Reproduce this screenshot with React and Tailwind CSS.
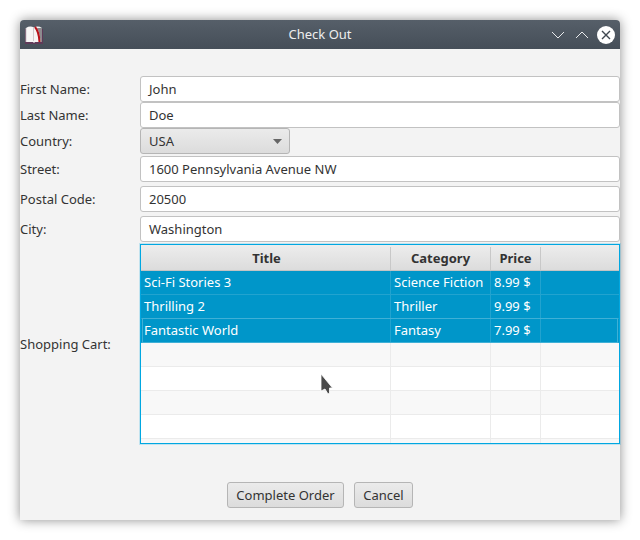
import React from 'react';

const items = [
    { title: 'Sci-Fi Stories 3', category: 'Science Fiction', price: '8.99 $' },
    { title: 'Thrilling 2', category: 'Thriller', price: '9.99 $' },
    { title: 'Fantastic World', category: 'Fantasy', price: '7.99 $' },
];

const Field = ({ label, value, className = '' }) => (
    <div className={`flex items-center ${className}`}>
        <span className="w-[120px] shrink-0 pt-[2px] text-[#333333]">{label}</span>
        <div className="flex h-[26px] grow items-center rounded-[3px] border border-[#c2c2c2] bg-white px-2 pt-[2px] text-[#333333]">
            {value}
        </div>
    </div>
);

const BookIcon = () => (
    <svg width="20" height="20" viewBox="0 0 20 20" className="block">
        <path d="M1 4 V19 H19 V4 Z" fill="#5f3a58" />
        <path d="M2 17 V3 Q6 0.5 10 2.5 Q14 0.5 18 3 V17 H11 L10 18 L9 17 Z" fill="#f7f5f5" />
        <path d="M13 3 Q16 8 16.5 17 H18 V3 Z" fill="#8d8a8e" />
        <path d="M2 3 V17 M9.5 3 V16" stroke="#c4bfc3" strokeWidth="0.8" fill="none" />
        <path d="M11 2 Q15 6.5 15.5 17" fill="none" stroke="#b8141c" strokeWidth="2" />
    </svg>
);

const Cursor = () => (
    <svg width="15" height="22" viewBox="0 0 15 22" className="absolute left-[178px] top-[128px]">
        <path d="M2 1 V18 L6 16 L9 21 L10.5 20 V15 H13.5 Z" fill="#4a4a4a" stroke="#ffffff" strokeWidth="0.8" />
    </svg>
);

export default function App() {
    return (
        <div className="h-[540px] w-[640px] bg-white pl-5 pt-5 font-['Noto_Sans',sans-serif] text-[13px]">
            <div className="flex h-[500px] w-[600px] flex-col rounded-t-[4px] bg-[#f3f3f3] shadow-[0_0_12px_rgba(0,0,0,0.45)]">
                {/* title bar */}
                <div className="grid h-[29px] shrink-0 grid-cols-[1fr_auto_1fr] items-center rounded-t-[4px] bg-gradient-to-b from-[#565f69] to-[#454e58] pl-[4px] pr-[5px]">
                    <BookIcon />
                    <span className="pl-px text-[#eeeeee]">Check Out</span>
                    <div className="flex items-center justify-end gap-[6px]">
                        <svg width="18" height="18" viewBox="0 0 18 18" fill="none" stroke="#e8eaec" strokeWidth="1">
                            <path d="M3 6 L9 12 L15 6" />
                        </svg>
                        <svg width="18" height="18" viewBox="0 0 18 18" fill="none" stroke="#e8eaec" strokeWidth="1">
                            <path d="M3 12 L9 6 L15 12" />
                        </svg>
                        <svg width="18" height="18" viewBox="0 0 18 18">
                            <circle cx="9" cy="9" r="9" fill="#ffffff" />
                            <path d="M5 5 L13 13 M13 5 L5 13" stroke="#3f4750" strokeWidth="1.4" />
                        </svg>
                    </div>
                </div>

                {/* form */}
                <div className="flex grow flex-col pt-[27px]">
                    <Field label="First Name:" value="John" />
                    <Field label="Last Name:" value="Doe" />
                    <div className="flex items-center">
                        <span className="w-[120px] shrink-0 pt-[2px] text-[#333333]">Country:</span>
                        <div className="flex h-[26px] w-[150px] items-center justify-between rounded-[3px] border border-[#b5b5b5] bg-gradient-to-b from-[#ebebeb] to-[#dcdcdc] pl-2 pr-[7px] text-[#333333]">
                            <span className="pt-[2px]">USA</span>
                            <svg width="9" height="5" viewBox="0 0 9 5">
                                <path d="M0 0 H9 L4.5 5 Z" fill="#666666" />
                            </svg>
                        </div>
                    </div>
                    <Field label="Street:" value="1600 Pennsylvania Avenue NW" className="mt-[2px]" />
                    <Field label="Postal Code:" value="20500" className="mt-1" />
                    <Field label="City:" value="Washington" className="mt-1" />

                    <div className="mt-[2px] flex items-center">
                        <span className="w-[120px] shrink-0 pt-[2px] text-[#333333]">Shopping Cart:</span>
                        <div className="relative h-[200px] grow overflow-hidden border border-[#00a7e1] bg-white text-[#333333] shadow-[0_0_0_1px_rgba(0,167,225,0.2)]">
                            <div className="flex h-[26px] border-b border-[#c4c4c4] bg-gradient-to-b from-[#ededed] to-[#dcdcdc] pt-[2px] font-bold">
                                <div className="flex w-[250px] items-center justify-center border-r border-[#c8c8c8] pl-[2px]">Title</div>
                                <div className="flex w-[100px] items-center justify-center border-r border-[#c8c8c8]">Category</div>
                                <div className="flex w-[50px] items-center justify-center border-r border-[#c8c8c8]">Price</div>
                                <div className="grow" />
                            </div>
                            {items.map((item, i) => (
                                <div key={item.title} className="relative flex h-6 border-b border-[#22a3cf] bg-[#0096c9] text-white">
                                    <div className="flex w-[250px] items-center border-r border-[#22a3cf] pl-[3px]">{item.title}</div>
                                    <div className="flex w-[100px] items-center border-r border-[#22a3cf] pl-[3px]">{item.category}</div>
                                    <div className="flex w-[50px] items-center border-r border-[#22a3cf] pl-[3px]">{item.price}</div>
                                    <div className="grow" />
                                    {i === 2 && <div className="absolute -bottom-px -top-px left-px right-px border border-[#3fb0d6]" />}
                                </div>
                            ))}
                            {['bg-[#f8f8f8]', 'bg-white', 'bg-[#f8f8f8]', 'bg-white', 'bg-[#f8f8f8]'].map((bg, i) => (
                                <div key={i} className={`flex h-6 border-b border-[#ebebeb] ${bg}`}>
                                    <div className="w-[250px] border-r border-[#ebebeb]" />
                                    <div className="w-[100px] border-r border-[#ebebeb]" />
                                    <div className="w-[50px] border-r border-[#ebebeb]" />
                                </div>
                            ))}
                            <Cursor />
                        </div>
                    </div>

                    <div className="mt-[38px] flex justify-center gap-[10px] text-[#333333]">
                        <button className="h-[26px] w-[117px] rounded-[3px] border border-[#b5b5b5] bg-gradient-to-b from-[#ebebeb] to-[#dcdcdc] pt-[2px]">Complete Order</button>
                        <button className="h-[26px] w-[59px] rounded-[3px] border border-[#b5b5b5] bg-gradient-to-b from-[#ebebeb] to-[#dcdcdc] pt-[2px]">Cancel</button>
                    </div>
                </div>
            </div>
        </div>
    );
}
